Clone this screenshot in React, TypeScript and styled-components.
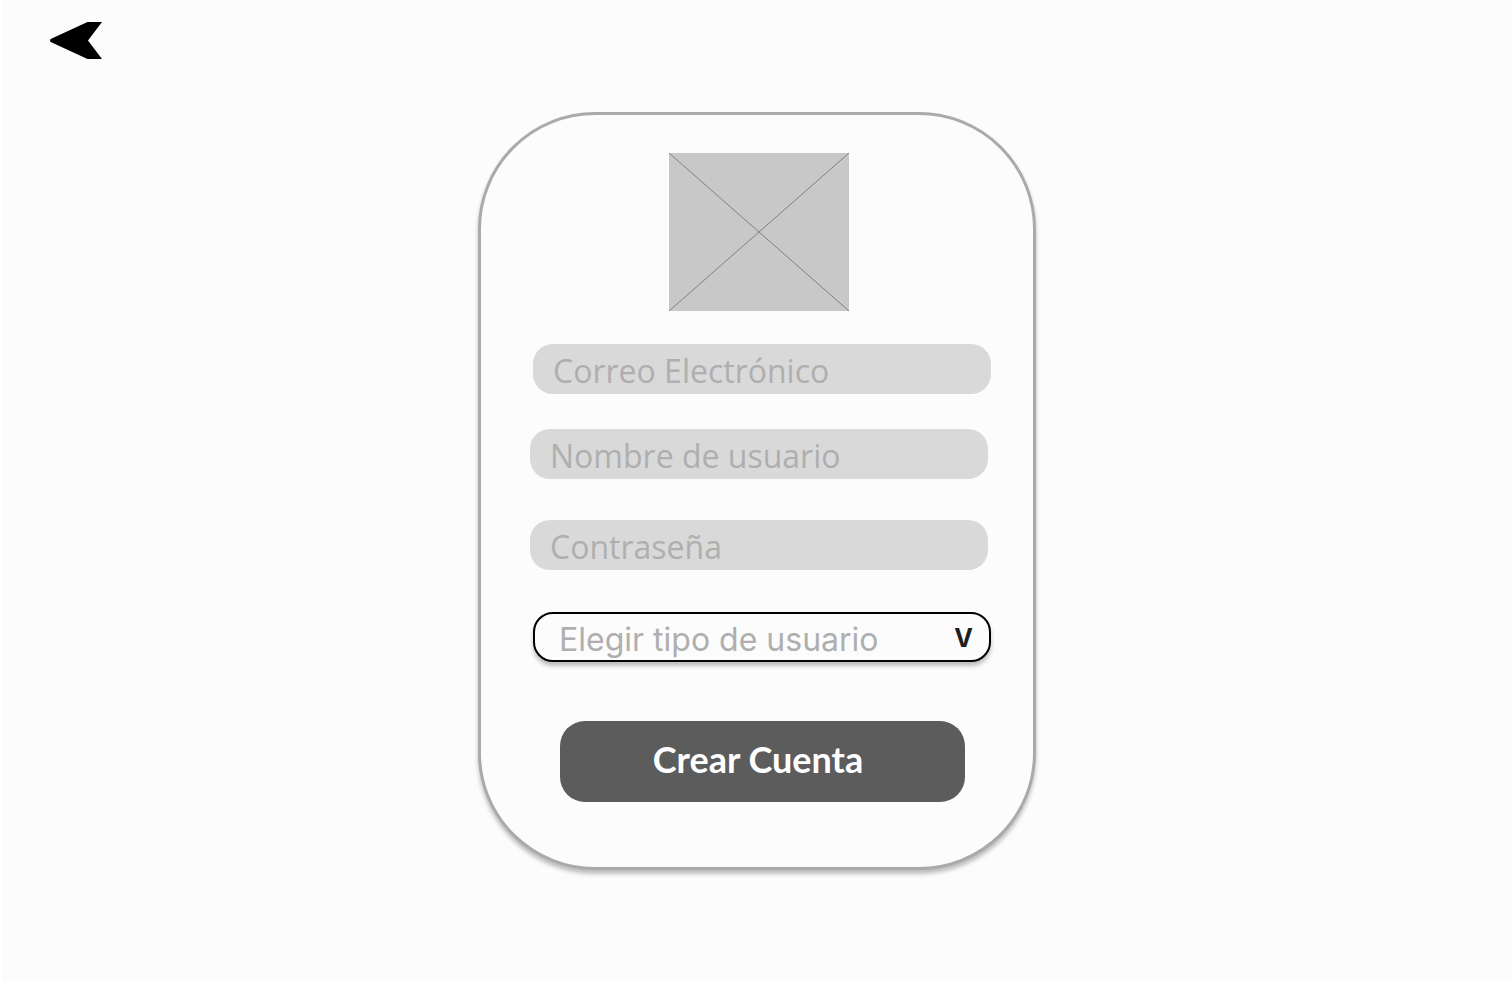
import React from "react";
import styled, { createGlobalStyle } from "styled-components";

const GlobalStyle = createGlobalStyle`
  *, *::before, *::after { box-sizing: border-box; }
  body { margin: 0; background: #fcfcfc; }
`;

const Page = styled.div`
  min-height: 100vh;
  border-left: 2px solid #ffffff;
  display: flex;
  flex-direction: column;
  font-family: "Open Sans", "Noto Sans", sans-serif;
`;

const Header = styled.header`
  display: flex;
  padding: 22px 48px 0;
`;

const BackButton = styled.button`
  display: block;
  padding: 0;
  border: 0;
  background: none;
  cursor: pointer;

  svg { display: block; }
`;

const Main = styled.main`
  display: flex;
  justify-content: center;
  padding: 53px 16px 112px;
`;

const Card = styled.form`
  display: flex;
  flex-direction: column;
  width: 100%;
  max-width: 558px;
  padding: 38px 45px 65px 49px;
  border: 3px solid #aaaaaa;
  border-radius: 117px;
  background: #fcfcfc;
  box-shadow: 0 4px 4px rgba(0, 0, 0, 0.25);
`;

const Placeholder = styled.svg`
  display: block;
  align-self: center;
  background: #c8c8c8;
`;

const Field = styled.div<{ $gap: number; $indent?: boolean }>`
  position: relative;
  margin-top: ${(p) => p.$gap}px;
  margin-left: ${(p) => (p.$indent ? 3 : 0)}px;
  margin-right: ${(p) => (p.$indent ? -3 : 0)}px;
`;

const TextInput = styled.input`
  display: block;
  width: 100%;
  height: 50px;
  padding: 2px 20px 0;
  border: 0;
  border-radius: 20px;
  outline: 0;
  background: #d9d9d9;
  color: #5c5c5c;
  font-family: inherit;
  font-size: 32px;

  &::placeholder { color: #afafaf; opacity: 1; }
`;

const Select = styled.select`
  display: block;
  width: 100%;
  height: 50px;
  padding: 4px 48px 0 24px;
  border: 2px solid #000000;
  border-radius: 20px;
  outline: 0;
  appearance: none;
  background: #fcfcfc;
  box-shadow: 0 4px 4px rgba(0, 0, 0, 0.25);
  color: #afafaf;
  font-family: Inter, sans-serif;
  font-size: 32px;
`;

const SelectMark = styled.span`
  position: absolute;
  top: 0;
  right: 18px;
  color: #1e1e1e;
  font-family: Inter, sans-serif;
  font-size: 25px;
  font-weight: 700;
  line-height: 53px;
  pointer-events: none;
`;

const SubmitButton = styled.button`
  height: 81px;
  margin: 59px 23px 0 30px;
  padding: 0 9px 6px 0;
  border: 0;
  border-radius: 25px;
  background: #5c5c5c;
  color: #ffffff;
  font-family: Lato, sans-serif;
  font-size: 36px;
  font-weight: 700;
  cursor: pointer;
`;

export default function App() {
  return (
    <Page>
      <GlobalStyle />
      <Header>
        <BackButton type="button" aria-label="Volver">
          <svg width="52" height="37" viewBox="0 0 52 37" aria-hidden="true">
            <path d="M37.5 0H52L38 18.5L52 37H37.5L1.2 20.2Q0 19.5 0 18.5Q0 17.5 1.2 16.8Z" fill="#000" />
          </svg>
        </BackButton>
      </Header>
      <Main>
        <Card onSubmit={(e: React.FormEvent) => e.preventDefault()}>
          <Placeholder width="180" height="158" viewBox="0 0 180 158" aria-hidden="true">
            <path d="M0 0L180 158M180 0L0 158" stroke="#808080" strokeWidth="1" />
          </Placeholder>
          <Field $gap={33} $indent>
            <TextInput type="email" aria-label="Correo Electrónico" placeholder="Correo Electrónico" />
          </Field>
          <Field $gap={35}>
            <TextInput type="text" aria-label="Nombre de usuario" placeholder="Nombre de usuario" />
          </Field>
          <Field $gap={41}>
            <TextInput type="password" aria-label="Contraseña" placeholder="Contraseña" />
          </Field>
          <Field $gap={42} $indent>
            <Select aria-label="Tipo de usuario" defaultValue="">
              <option value="">Elegir tipo de usuario</option>
            </Select>
            <SelectMark aria-hidden="true">V</SelectMark>
          </Field>
          <SubmitButton type="submit">Crear Cuenta</SubmitButton>
        </Card>
      </Main>
    </Page>
  );
}
